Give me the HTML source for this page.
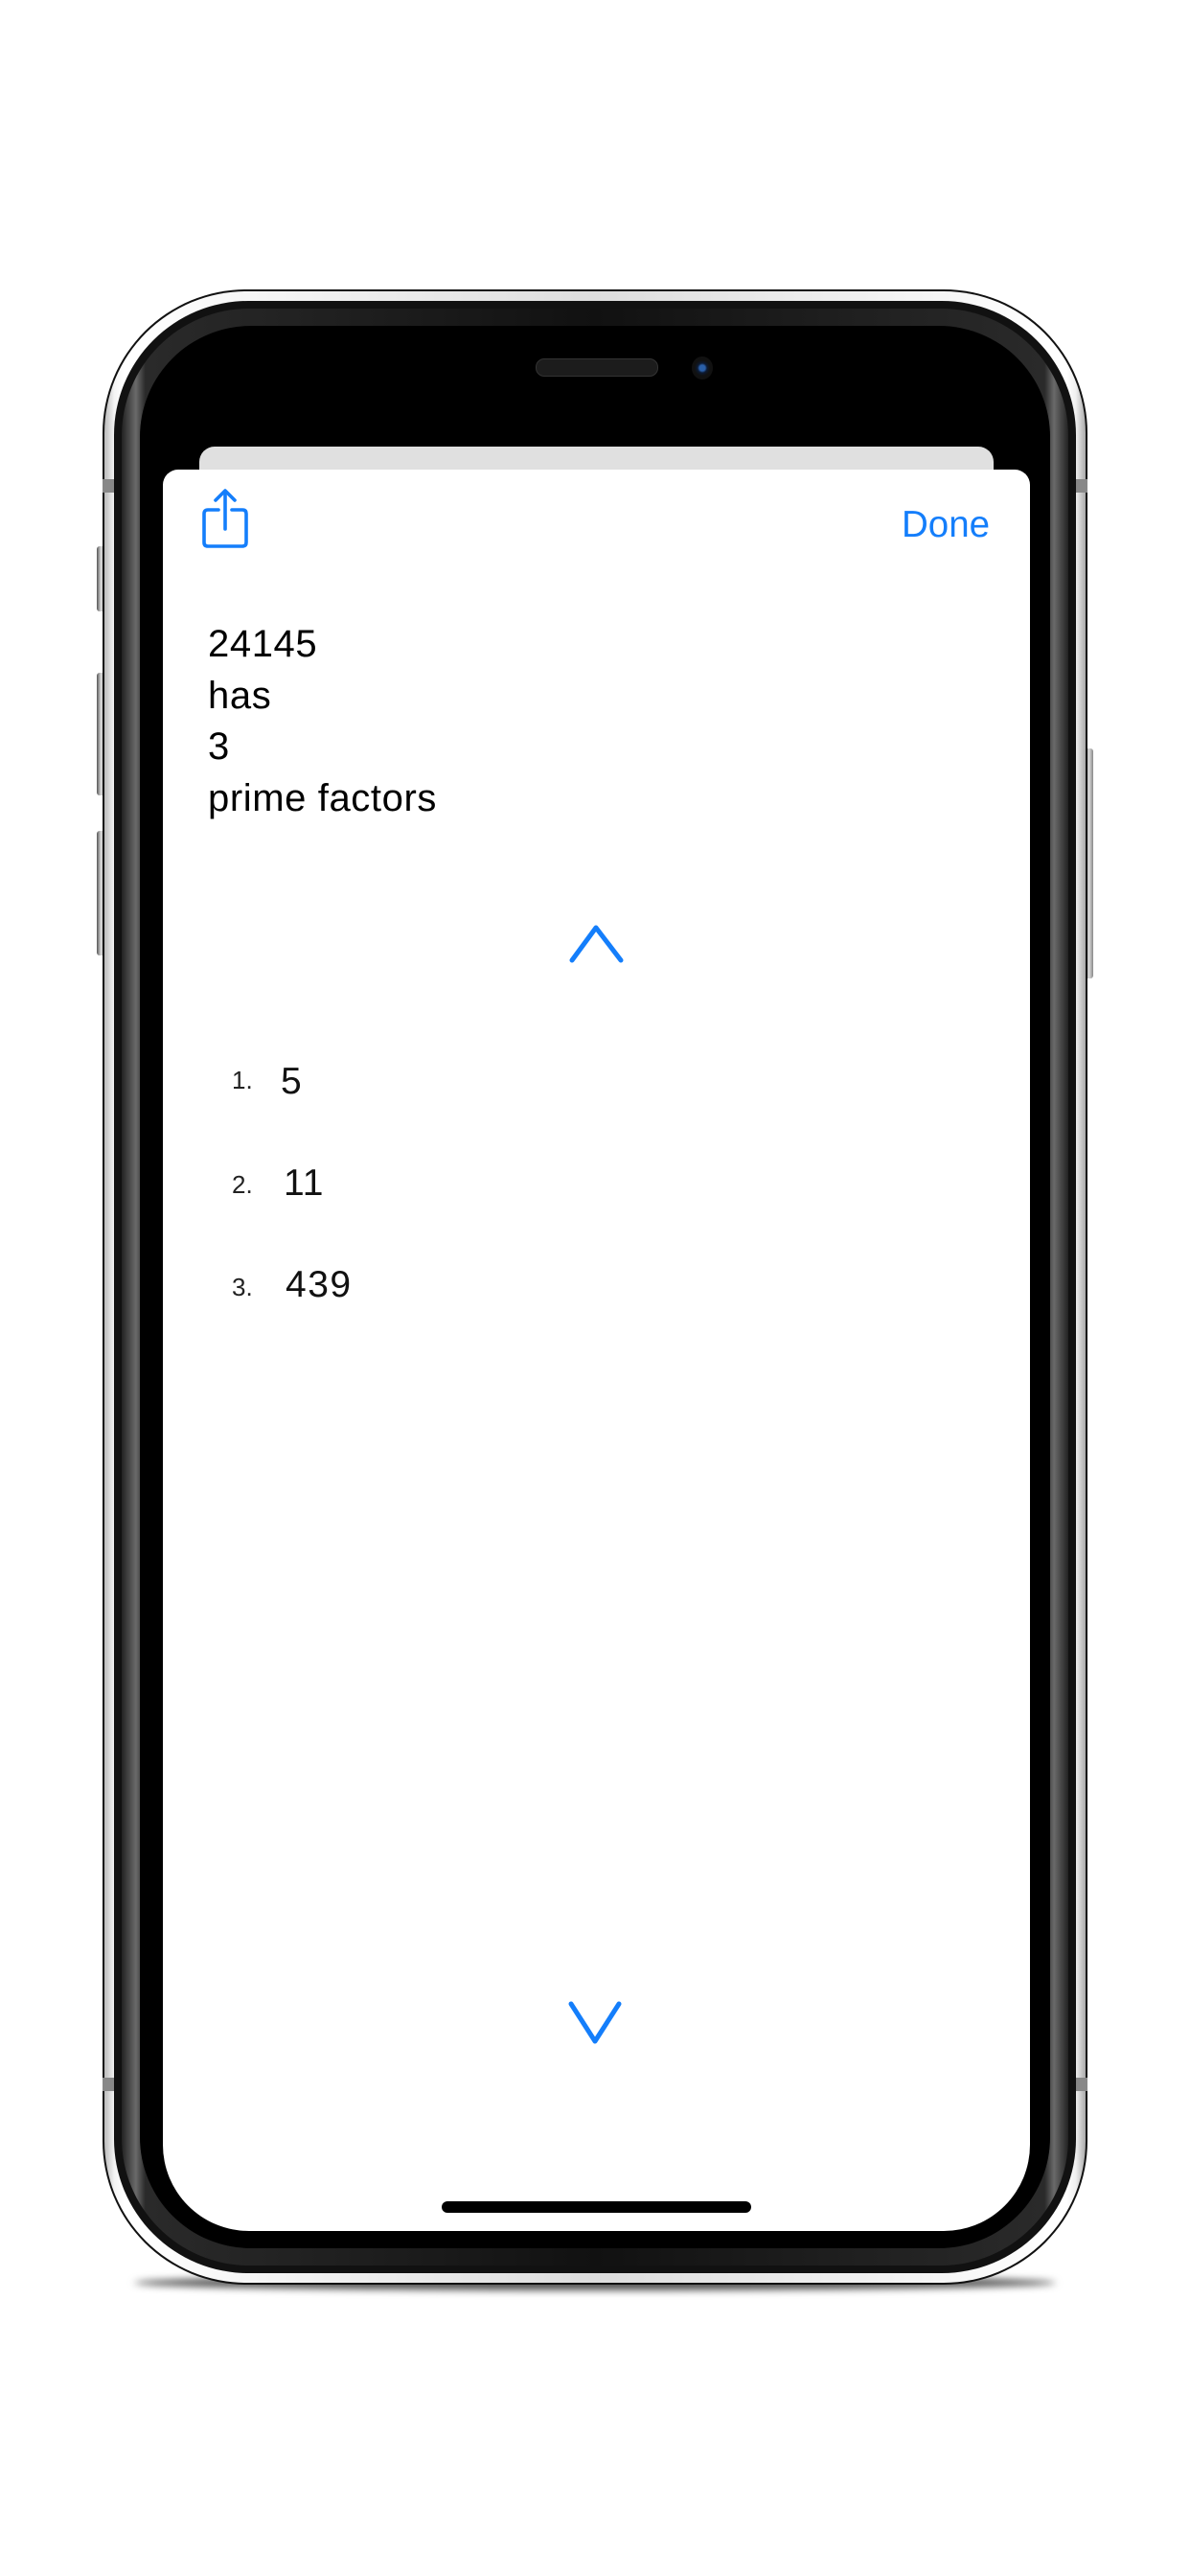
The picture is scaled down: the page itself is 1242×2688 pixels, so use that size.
<!DOCTYPE html>
<html><head><meta charset="utf-8">
<style>
html,body{margin:0;padding:0;background:#fff;}
body{width:1242px;height:2688px;position:relative;overflow:hidden;font-family:"Liberation Sans",sans-serif;}
.abs{position:absolute;}
.shadow{left:140px;top:2374px;width:962px;height:16px;border-radius:50%;background:#555;filter:blur(4px);}
.outer{left:107px;top:302px;width:1028px;height:2082px;border-radius:150px;background:#111;}
.silver{left:109px;top:304px;width:1024px;height:2078px;border-radius:148px;background:linear-gradient(90deg,#bbb 0%,#f4f4f4 1%,#fff 2%,#ddd 50%,#fff 98%,#f0f0f0 99%,#aaa 100%);}
.dark1{left:119px;top:314px;width:1004px;height:2058px;border-radius:140px;background:#111;}
.gray{left:127px;top:322px;width:988px;height:2042px;border-radius:133px;background:linear-gradient(90deg,#222,#6a6a6a 1.5%,#2a2a2a 2.5%,#111 50%,#2a2a2a 97.5%,#6a6a6a 98.5%,#222);}
.screen{left:146px;top:340px;width:950px;height:2006px;border-radius:116px;background:#000;}
.btn{background:linear-gradient(90deg,#555,#ddd,#888);border-radius:3px;}
.band{background:#888;}
.gcard{left:208px;top:466px;width:829px;height:60px;border-radius:16px;background:#e0e0e0;}
.card{left:170px;top:490px;width:905px;height:1838px;background:#fff;border-radius:16px 16px 90px 90px;}
.t{position:absolute;white-space:nowrap;line-height:1;}
</style></head><body>
<div class="abs shadow"></div>
<div class="abs btn" style="left:101px;top:570px;width:9px;height:68px"></div>
<div class="abs btn" style="left:101px;top:702px;width:9px;height:128px"></div>
<div class="abs btn" style="left:101px;top:867px;width:9px;height:130px"></div>
<div class="abs btn" style="left:1132px;top:781px;width:9px;height:240px"></div>
<div class="abs outer"></div>
<div class="abs silver"></div>
<div class="abs band" style="left:107px;top:500px;width:14px;height:14px"></div>
<div class="abs band" style="left:1121px;top:500px;width:14px;height:14px"></div>
<div class="abs band" style="left:107px;top:2168px;width:14px;height:14px"></div>
<div class="abs band" style="left:1121px;top:2168px;width:14px;height:14px"></div>
<div class="abs dark1"></div>
<div class="abs gray"></div>
<div class="abs screen"></div>
<div class="abs" style="left:559px;top:374px;width:126px;height:17px;border-radius:9px;background:#1c1c1c;border:1px solid #333"></div>
<div class="abs" style="left:722px;top:372px;width:22px;height:24px;border-radius:50%;background:radial-gradient(circle at 50% 50%,#2a5fa8 0 3px,#0c1a33 5px,#111 8px)"></div>
<div class="abs gcard"></div>
<div class="abs card"></div>

<svg class="abs" style="left:205px;top:508px" width="60" height="66" viewBox="0 0 60 66">
<g fill="none" stroke="#147efb" stroke-width="3.6" stroke-linecap="round" stroke-linejoin="round">
<path d="M23 24 H12 Q8 24 8 28 V58 Q8 62 12 62 H48 Q52 62 52 58 V28 Q52 24 48 24 H37"/>
<path d="M30 44 V5"/>
<path d="M20 14 L30 4 L40 14"/>
</g></svg>
<div class="t" style="left:941px;top:529px;font-size:38.5px;color:#147efb">Done</div>

<div class="t" style="left:217px;top:646px;font-size:40px;line-height:53.6px;color:#000;letter-spacing:0.6px">24145<br>has<br>3<br>prime factors</div>

<svg class="abs" style="left:590px;top:960px" width="66" height="50" viewBox="0 0 66 50">
<path d="M7 42 L32 8 L58 42" fill="none" stroke="#147efb" stroke-width="5" stroke-linecap="round" stroke-linejoin="round"/></svg>

<div class="t" style="left:242px;top:1114px;font-size:26px;color:#222">1.</div>
<div class="t" style="left:293px;top:1109px;font-size:39px;color:#111;letter-spacing:1px">5</div>
<div class="t" style="left:242px;top:1223px;font-size:26px;color:#222">2.</div>
<div class="t" style="left:296px;top:1215px;font-size:39px;color:#111;letter-spacing:1px">11</div>
<div class="t" style="left:242px;top:1330px;font-size:26px;color:#222">3.</div>
<div class="t" style="left:298px;top:1321px;font-size:39px;color:#111;letter-spacing:1.5px">439</div>

<svg class="abs" style="left:588px;top:2084px" width="66" height="52" viewBox="0 0 66 52">
<path d="M8 7 L33 46 L58 7" fill="none" stroke="#147efb" stroke-width="5" stroke-linecap="round" stroke-linejoin="round"/></svg>

<div class="abs" style="left:461px;top:2297px;width:323px;height:12px;border-radius:6px;background:#000"></div>
</body></html>
